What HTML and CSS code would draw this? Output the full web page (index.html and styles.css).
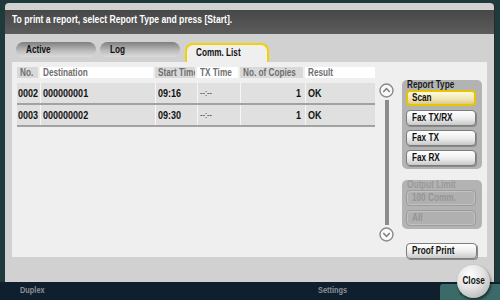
FILE: index.html
```html
<!DOCTYPE html>
<html lang="en">
<head>
    <meta charset="UTF-8">
    <title>Comm. List - Report</title>
    <link rel="stylesheet" href="styles.css">
</head>
<body>
    <div class="screen">
        <div class="dialog">
            <div class="dialog-header"><span class="t">To print a report, select Report Type and press [Start].</span></div>
            <div class="dialog-body">
                <div class="tabs">
                    <div class="tab"><span class="t">Active</span></div>
                    <div class="tab"><span class="t">Log</span></div>
                    <div class="tab tab-current"><span class="t">Comm. List</span></div>
                </div>

                <div class="panel">
                    <div class="list">
                        <div class="list-row list-head">
                            <div class="head-cell shaded"><span class="t">No.</span></div>
                            <div class="head-cell"><span class="t">Destination</span></div>
                            <div class="head-cell shaded"><span class="t">Start Time</span></div>
                            <div class="head-cell"><span class="t">TX Time</span></div>
                            <div class="head-cell shaded"><span class="t">No. of Copies</span></div>
                            <div class="head-cell"><span class="t">Result</span></div>
                        </div>
                        <div class="list-row list-item">
                            <div class="cell"><span class="t">0002</span></div>
                            <div class="cell"><span class="t">000000001</span></div>
                            <div class="cell"><span class="t">09:16</span></div>
                            <div class="cell cell-dim"><span class="t">--:--</span></div>
                            <div class="cell cell-num"><span class="t">1</span></div>
                            <div class="cell"><span class="t">OK</span></div>
                        </div>
                        <div class="list-row list-item">
                            <div class="cell"><span class="t">0003</span></div>
                            <div class="cell"><span class="t">000000002</span></div>
                            <div class="cell"><span class="t">09:30</span></div>
                            <div class="cell cell-dim"><span class="t">--:--</span></div>
                            <div class="cell cell-num"><span class="t">1</span></div>
                            <div class="cell"><span class="t">OK</span></div>
                        </div>
                    </div>

                    <div class="scroller">
                        <svg class="scroll-btn" width="15" height="15" viewBox="0 0 15 15">
                            <circle cx="7.5" cy="7.5" r="6.5" fill="#fafafa" stroke="#8a8a8a" stroke-width="1.4"/>
                            <polyline points="4.3,9 7.5,5.6 10.7,9" fill="none" stroke="#7a7a7a" stroke-width="1.5"/>
                        </svg>
                        <div class="scroll-track"></div>
                        <svg class="scroll-btn" width="15" height="15" viewBox="0 0 15 15">
                            <circle cx="7.5" cy="7.5" r="6.5" fill="#fafafa" stroke="#8a8a8a" stroke-width="1.4"/>
                            <polyline points="4.3,6 7.5,9.4 10.7,6" fill="none" stroke="#7a7a7a" stroke-width="1.5"/>
                        </svg>
                    </div>

                    <div class="side">
                        <div class="group">
                            <div class="group-title"><span class="t">Report Type</span></div>
                            <div class="btn btn-selected"><span class="t">Scan</span></div>
                            <div class="btn"><span class="t">Fax TX/RX</span></div>
                            <div class="btn"><span class="t">Fax TX</span></div>
                            <div class="btn"><span class="t">Fax RX</span></div>
                        </div>
                        <div class="group group-off">
                            <div class="group-title"><span class="t">Output Limit</span></div>
                            <div class="btn btn-off"><span class="t">100 Comm.</span></div>
                            <div class="btn btn-off"><span class="t">All</span></div>
                        </div>
                        <div class="btn btn-proof"><span class="t">Proof Print</span></div>
                    </div>
                </div>
            </div>
        </div>

        <div class="taskbar">
            <span class="task task-duplex"><span class="t">Duplex</span></span>
            <span class="task task-settings"><span class="t">Settings</span></span>
            <span class="task-apply"><span class="t">Apply</span></span>
        </div>

        <div class="close-btn"><span class="t">Close</span></div>
    </div>
</body>
</html>
```

FILE: styles.css
```css
body {
    margin: 0;
    width: 500px;
    height: 300px;
    overflow: hidden;
    background: #1e3a3b;
    font-family: 'Liberation Sans', Arial, sans-serif;
    font-weight: bold;
    color: #111;
}
/* the panel font is a condensed sans; squeeze Liberation Sans to its width */
.t {
    display: inline-block;
    white-space: nowrap;
    transform: scaleX(0.82);
    transform-origin: 0 50%;
}
.screen {
    position: relative;
    width: 500px;
    height: 300px;
    padding-top: 3px;
    box-sizing: border-box;
}
.dialog {
    width: 489px;
    height: 279px;
    margin-left: 5px;
    padding-top: 7px;
    box-sizing: border-box;
    background: #d1d1d1;
    border-radius: 4px 4px 0 0;
    box-shadow: 0 1px 0 #3a3a3a, 1px 0 0 #2a2a2a;
}
.dialog-header {
    height: 24px;
    box-sizing: border-box;
    padding: 2px 0 0 7px;
    background: linear-gradient(#474747, #5c5c5c);
    color: #fff;
    font-size: 10.5px;
    line-height: 14px;
}
.dialog-body {
    padding: 8px 7px 0 7px;
}
.tabs {
    display: flex;
    height: 20px;
    padding-left: 4px;
}
.tab {
    width: 80px;
    height: 15px;
    margin-right: 4px;
    padding-left: 10px;
    box-sizing: border-box;
    border-radius: 8px;
    background: linear-gradient(#7e7e7e, #b9b9b9 55%, #dcdcdc);
    font-size: 10px;
    line-height: 15px;
}
.tab-current {
    width: 84px;
    height: 19px;
    margin: 1px 0 0 1px;
    padding-left: 9px;
    border: 2px solid #f2d200;
    border-bottom: none;
    border-radius: 8px 8px 0 0;
    background: #efefef;
    line-height: 15px;
}
.panel {
    display: flex;
    height: 195px;
    box-sizing: border-box;
    padding: 5px 4px 0 5px;
    background: #efefef;
}
.list {
    width: 358px;
}
.list-row {
    display: grid;
    grid-template-columns: 23px 115px 42px 43px 65px 70px;
}
.list-head {
    margin-bottom: 5px;
}
.head-cell {
    height: 11px;
    margin-right: 2px;
    padding-left: 3px;
    background: #fff;
    color: #6e6e6e;
    font-size: 10px;
    line-height: 11px;
    white-space: nowrap;
    overflow: hidden;
}
.head-cell:last-child {
    margin-right: 0;
}
.head-cell.shaded {
    background: #d9d9d9;
}
.list-item {
    height: 22px;
    box-sizing: border-box;
    background: #e0e0e0;
    border-bottom: 2px solid #a2a2a2;
}
.cell {
    padding-left: 2px;
    font-size: 11px;
    line-height: 20px;
    border-left: 1px solid #f6f6f6;
    overflow: hidden;
}
.cell:first-child {
    padding-left: 1px;
    border-left: none;
}
.cell-dim {
    font-weight: normal;
    font-size: 9px;
    color: #333;
}
.cell-num {
    text-align: right;
    padding-right: 4px;
}
.cell-num .t {
    transform-origin: 100% 50%;
}
.scroller {
    display: flex;
    flex-direction: column;
    align-items: center;
    width: 15px;
    margin: 16px 0 0 4px;
}
.scroll-btn {
    display: block;
}
.scroll-track {
    width: 4px;
    height: 125px;
    margin: 2px 0;
    background: #8c8c8c;
}
.side {
    width: 80px;
    margin: 16px 0 0 8px;
}
.group {
    padding: 0 6px 3px 4px;
    margin-bottom: 14px;
    border-radius: 5px;
    background: #b3b3b3;
}
.group-title {
    margin: -3px 0 0 1px;
    font-size: 10px;
    line-height: 10px;
    color: #1a1a1a;
}
.group-off .group-title {
    color: #9a9a9a;
}
.btn {
    height: 16px;
    margin-bottom: 4px;
    padding-left: 5px;
    box-sizing: border-box;
    border: 1px solid #7c7c7c;
    border-radius: 4px;
    background: linear-gradient(#ffffff, #ececec 55%, #c9c9c9);
    box-shadow: 1px 1px 0 #8a8a8a;
    font-size: 10px;
    line-height: 14px;
}
.group .btn:last-child {
    margin-bottom: 0;
}
.btn-selected {
    border: 2px solid #e6c400;
    padding-left: 4px;
    line-height: 12px;
    background: linear-gradient(#fff9df, #f0e4b4 60%, #dccb8c);
    box-shadow: none;
}
.btn-off {
    border: 1px solid #9c9c9c;
    background: #b0b0b0;
    box-shadow: inset 0 0 0 1px #c2c2c2;
    color: #959595;
}
.btn-proof {
    width: 71px;
    margin: 8px 0 0 4px;
}
.taskbar {
    position: relative;
    height: 18px;
    background: #0f1f2d;
}
.task {
    position: absolute;
    top: 3px;
    font-size: 9px;
    color: #8b9096;
}
.task-duplex {
    left: 20px;
}
.task-settings {
    left: 318px;
}
.task-apply {
    position: absolute;
    left: 440px;
    top: 2px;
    width: 60px;
    height: 16px;
    padding-left: 20px;
    box-sizing: border-box;
    background: #3b6a69;
    border-radius: 3px 0 0 0;
    font-size: 9px;
    line-height: 16px;
    color: #10302f;
}
.close-btn {
    position: absolute;
    left: 457px;
    top: 265px;
    width: 33px;
    height: 33px;
    border-radius: 50%;
    background: radial-gradient(circle at 38% 30%, #ffffff, #e2e2e2 45%, #a4a4a4 100%);
    box-shadow: 1px 2px 3px rgba(0, 0, 0, 0.6);
    font-size: 10px;
    line-height: 31px;
    text-align: center;
}
.close-btn .t {
    transform-origin: 50% 50%;
}
```
